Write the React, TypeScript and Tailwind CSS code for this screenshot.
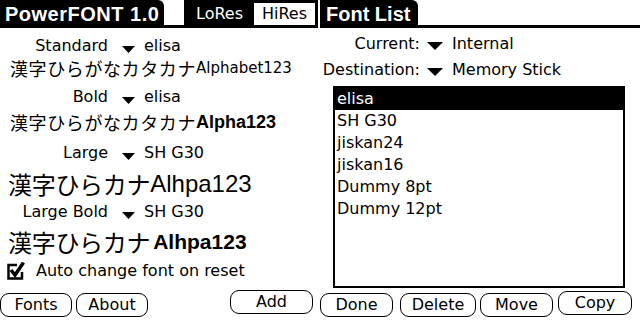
import React from "react"

const sans = "font-['DejaVu_Sans',sans-serif]"
const cjk = "font-['Noto_Sans_CJK_JP',sans-serif]"
const lib = "font-['Liberation_Sans',sans-serif]"

function Tri({ w = 12, h = 7 }: { w?: number; h?: number }) {
  return (
    <svg width={w} height={h} viewBox={`0 0 ${w} ${h}`} className="shrink-0">
      <path d={`M0 0H${w}L${w / 2} ${h}Z`} fill="black" />
    </svg>
  )
}

function Btn({ label, className }: { label: string; className: string }) {
  return (
    <div
      className={`flex h-[24px] items-center justify-center rounded-[9px] border border-black text-[16px] leading-none ${className}`}
    >
      {label}
    </div>
  )
}

function Picker({ label, value, top }: { label: string; value: string; top: string }) {
  return (
    <div className={`flex h-[20px] items-center text-[16px] ${top}`}>
      <div className="w-[108px] text-right">{label}</div>
      <div className="ml-[14px] mt-[6px]">
        <Tri w={13} />
      </div>
      <div className="ml-[9px]">{value}</div>
    </div>
  )
}

const fonts = ["elisa", "SH G30", "jiskan24", "jiskan16", "Dummy 8pt", "Dummy 12pt"]

export default function App() {
  return (
    <div className={`flex h-[320px] w-[640px] overflow-hidden bg-white text-black ${sans}`}>
      {/* left form */}
      <div className="flex w-[318px] flex-col">
        <div className="flex h-[28px] items-start">
          <div
            className={`flex h-[28px] w-[164px] items-center rounded-tr-[6px] bg-black pl-[5px] text-[20px] font-bold tracking-[0.5px] text-white ${lib}`}
          >
            PowerFONT 1.0
          </div>
          <div className="h-[28px] w-[20px] border-b-[3px] border-black" />
          <div className="flex h-[28px] flex-1 items-start bg-black pl-[5px] pt-[3px]">
            <div className="flex h-[22px] w-[61px] items-center justify-center text-[16px] text-white">
              LoRes
            </div>
            <div className="ml-[4px] flex h-[22px] w-[61px] items-center justify-center bg-white text-[16px]">
              HiRes
            </div>
          </div>
        </div>

        <Picker label="Standard" value="elisa" top="mt-[8px]" />
        <div className="flex h-[24px] items-center pl-[10px] whitespace-nowrap">
          <span className={`${cjk} text-[18px] tracking-[0.6px]`}>漢字ひらがなカタカナ</span>
          <span className="text-[15px]">Alphabet123</span>
        </div>

        <Picker label="Bold" value="elisa" top="mt-[7px]" />
        <div className="mt-[3px] flex h-[24px] items-center pl-[10px] whitespace-nowrap">
          <span className={`${cjk} text-[18px] tracking-[0.6px]`}>漢字ひらがなカタカナ</span>
          <span className={`${lib} text-[18px] font-bold`}>Alpha123</span>
        </div>

        <Picker label="Large" value="SH G30" top="mt-[9px]" />
        <div className="mt-[5px] flex h-[32px] items-center pl-[8px] whitespace-nowrap">
          <span className={`${cjk} text-[24px] tracking-[-0.3px]`}>漢字ひらカナ</span>
          <span className={`${lib} text-[24px]`}>Alhpa123</span>
        </div>

        <Picker label="Large Bold" value="SH G30" top="mt-[2px]" />
        <div className="mt-[4px] flex h-[32px] items-center pl-[8px] whitespace-nowrap">
          <span className={`${cjk} text-[24px] tracking-[-0.3px]`}>漢字ひらカナ</span>
          <span className={`${lib} ml-[3px] text-[21px] font-bold`}>Alhpa123</span>
        </div>

        <div className="mt-[3px] flex h-[20px] items-center pl-[7px] text-[16px]">
          <svg width="18" height="18" viewBox="0 0 18 18" className="shrink-0">
            <path d="M10 3H1.5V16.5H15V10" fill="none" stroke="black" strokeWidth="2.5" />
            <path d="M4 8L8 13L16.5 0.5" fill="none" stroke="black" strokeWidth="3.5" />
          </svg>
          <span className="ml-[11px]">Auto change font on reset</span>
        </div>

        <div className="mt-[9px] flex items-start">
          <Btn label="Fonts" className="mt-[3px] w-[72px]" />
          <Btn label="About" className="ml-[4px] mt-[3px] w-[72px]" />
          <Btn label="Add" className="ml-[82px] w-[83px]" />
        </div>
      </div>

      {/* right form */}
      <div className="ml-[2px] flex flex-1 flex-col">
        <div className="flex h-[28px] items-start border-b-[3px] border-black">
          <div
            className={`flex h-[28px] w-[98px] items-center rounded-tr-[6px] bg-black pl-[6px] text-[20px] font-bold text-white ${lib}`}
          >
            Font List
          </div>
        </div>

        <div className="mt-[6px] flex h-[20px] items-center text-[16px]">
          <div className="w-[100px] text-right">Current:</div>
          <div className="ml-[7px] mt-[3px]">
            <Tri w={16} h={8} />
          </div>
          <div className="ml-[9px]">Internal</div>
        </div>
        <div className="mt-[6px] flex h-[20px] items-center text-[16px]">
          <div className="w-[100px] text-right">Destination:</div>
          <div className="ml-[7px] mt-[3px]">
            <Tri w={16} h={8} />
          </div>
          <div className="ml-[9px]">Memory Stick</div>
        </div>

        <div className="ml-[13px] mt-[6px] flex h-[202px] w-[292px] flex-col border-2 border-black">
          {fonts.map((f, i) => (
            <div
              key={f}
              className={`flex h-[22px] items-center px-[2px] text-[16px] ${i === 0 ? "bg-black text-white" : ""}`}
            >
              {f}
            </div>
          ))}
        </div>

        <div className="mt-[3px] flex items-start">
          <Btn label="Done" className="mt-[2px] w-[73px]" />
          <Btn label="Delete" className="ml-[7px] mt-[2px] w-[76px]" />
          <Btn label="Move" className="ml-[4px] mt-[2px] w-[73px]" />
          <Btn label="Copy" className="ml-[5px] h-[22px] w-[74px]" />
        </div>
      </div>
    </div>
  )
}
